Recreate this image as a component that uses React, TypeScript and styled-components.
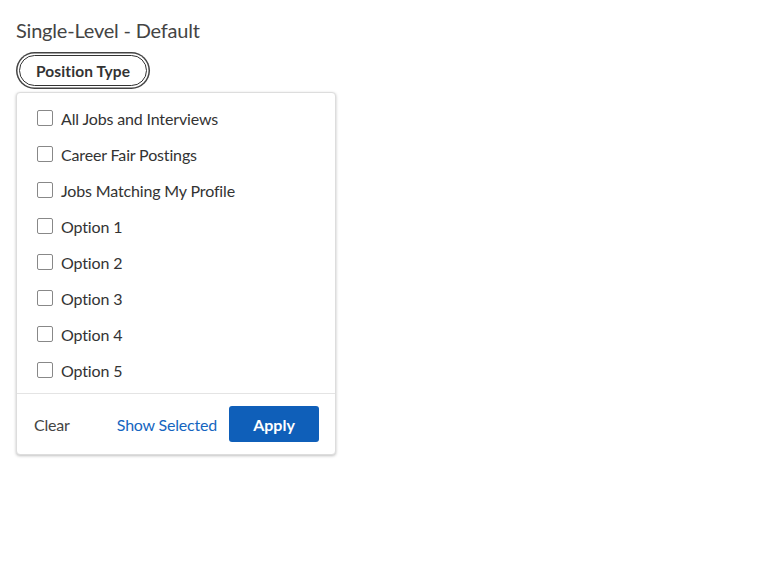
import React from 'react';
import styled, { createGlobalStyle } from 'styled-components';

const GlobalStyle = createGlobalStyle`
  body {
    margin: 0;
    background: #fff;
    font-family: Lato, "Noto Sans", sans-serif;
    color: #333;
  }
`;

const Page = styled.div`
  padding: 18px 16px;
`;

const Heading = styled.h2`
  margin: 0 0 13px;
  font-size: 20px;
  font-weight: 400;
  color: #444;
  line-height: 24px;
  letter-spacing: -0.2px;
`;

const FilterButton = styled.button`
  margin-left: 3px;
  height: 31px;
  padding: 0 16px;
  border: 1.5px solid #333;
  border-radius: 16px;
  background: #fff;
  box-shadow: 0 0 0 1.5px #fff, 0 0 0 3px #444;
  font-family: inherit;
  font-size: 15.5px;
  font-weight: 700;
  color: #333;
  letter-spacing: 0.1px;
  cursor: pointer;
`;

const Panel = styled.div`
  margin-top: 6px;
  width: 318px;
  border: 1px solid #ddd;
  border-radius: 4px;
  box-shadow: 0 1px 3px rgba(0, 0, 0, 0.25);
  background: #fff;
`;

const OptionList = styled.div`
  padding: 7px 0 5px;
`;

const OptionRow = styled.label`
  display: flex;
  align-items: center;
  gap: 8px;
  height: 36px;
  padding-left: 20px;
  font-size: 16px;
  color: #333;
  letter-spacing: -0.15px;
  cursor: pointer;
`;

const Box = styled.span`
  width: 14px;
  height: 14px;
  border: 1px solid #888;
  border-radius: 2px;
  flex-shrink: 0;
`;

const Footer = styled.div`
  display: flex;
  align-items: center;
  border-top: 1px solid #e4e4e4;
  padding: 12px 16px 12px 17px;
`;

const TextButton = styled.button<{ $primary?: boolean }>`
  border: none;
  background: none;
  padding: 0;
  font-family: inherit;
  font-size: 16px;
  letter-spacing: -0.2px;
  color: ${p => (p.$primary ? '#1565c0' : '#444')};
  margin-right: ${p => (p.$primary ? '12px' : 'auto')};
  cursor: pointer;
`;

const ApplyButton = styled.button`
  width: 90px;
  height: 36px;
  border: none;
  border-radius: 3px;
  background: #0f5fb9;
  color: #fff;
  font-family: inherit;
  font-size: 16px;
  font-weight: 700;
  cursor: pointer;
`;

const options = [
  'All Jobs and Interviews',
  'Career Fair Postings',
  'Jobs Matching My Profile',
  'Option 1',
  'Option 2',
  'Option 3',
  'Option 4',
  'Option 5',
];

const App: React.FC = () => (
  <>
    <GlobalStyle />
    <Page>
      <Heading>Single-Level - Default</Heading>
      <FilterButton>Position Type</FilterButton>
      <Panel>
        <OptionList>
          {options.map(o => (
            <OptionRow key={o}>
              <Box />
              {o}
            </OptionRow>
          ))}
        </OptionList>
        <Footer>
          <TextButton>Clear</TextButton>
          <TextButton $primary>Show Selected</TextButton>
          <ApplyButton>Apply</ApplyButton>
        </Footer>
      </Panel>
    </Page>
  </>
);

export default App;
